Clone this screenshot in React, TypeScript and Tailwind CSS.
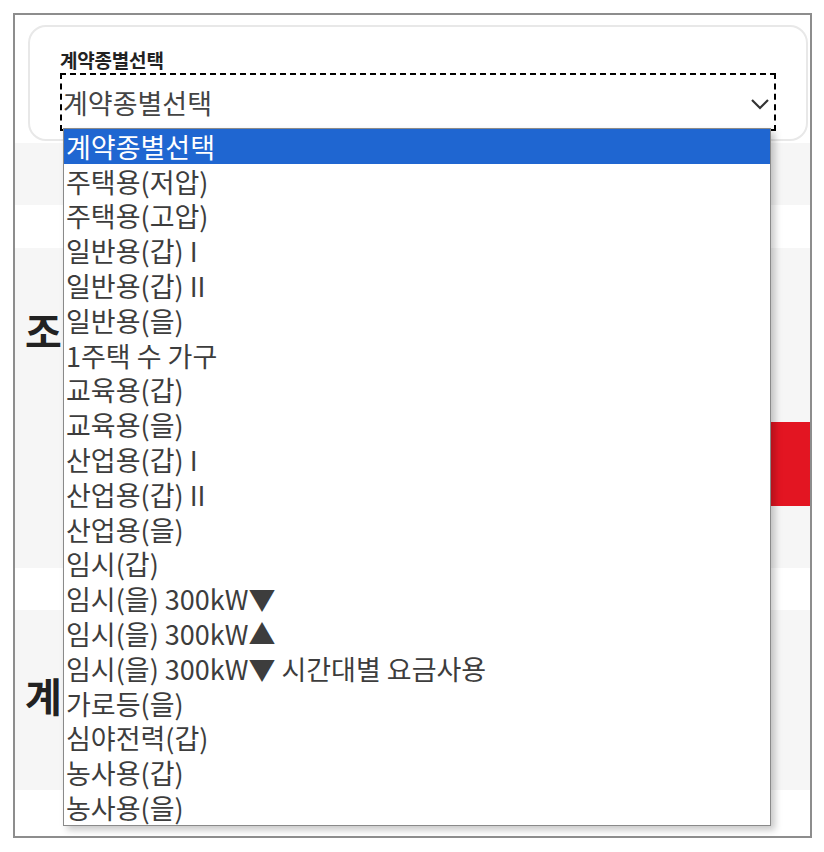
import React from 'react';

const options = [
  '계약종별선택',
  '주택용(저압)',
  '주택용(고압)',
  '일반용(갑) I',
  '일반용(갑) II',
  '일반용(을)',
  '1주택 수 가구',
  '교육용(갑)',
  '교육용(을)',
  '산업용(갑) I',
  '산업용(갑) II',
  '산업용(을)',
  '임시(갑)',
  '임시(을) 300kW▼',
  '임시(을) 300kW▲',
  '임시(을) 300kW▼ 시간대별 요금사용',
  '가로등(을)',
  '심야전력(갑)',
  '농사용(갑)',
  '농사용(을)',
];

const font = { fontFamily: '"Noto Sans CJK KR", "Noto Sans", sans-serif' };

export default function App() {
  return (
    <div className="w-[824px] h-[852px] bg-white pt-[13px] pl-[13px]" style={font}>
      <div className="relative w-[799px] h-[825px] border-2 border-[#8d8d8d] overflow-hidden flex flex-col bg-white">
        {/* search card */}
        <div className="pt-[10px] pl-[13px] pr-[2px] pb-[2px]">
          <div className="h-[116px] border-2 border-[#e8e8e8] rounded-[18px] bg-white px-[30px] pt-[22px]">
            <p className="text-[19px] leading-[22px] font-bold text-[#222] tracking-[-0.2px]">계약종별선택</p>
            <div className="mt-[2px] h-[58px] border-2 border-dashed border-black flex items-center justify-between pl-[1px] pr-[4px]">
              <span className="text-[27px] leading-none text-[#444]">계약종별선택</span>
              <svg width="20" height="12" viewBox="0 0 20 12" className="mt-[4px]">
                <polyline points="2,2 10,10 18,2" fill="none" stroke="#333" strokeWidth="2.2" />
              </svg>
            </div>
          </div>
        </div>

        <div className="h-[62px] bg-[#f6f6f6]" />
        <div className="h-[43px] bg-white" />

        <div className="h-[320px] bg-[#f6f6f6] flex flex-col px-[10px]">
          <h2 className="mt-[62px] text-[40px] leading-[40px] font-bold text-[#222]">조</h2>
          <div className="mt-[72px] self-end -mr-[10px] w-[240px] h-[84px] bg-[#e31522]" />
        </div>

        <div className="h-[42px] bg-white" />

        <div className="h-[180px] bg-[#f6f6f6] px-[10px]">
          <h2 className="mt-[65px] text-[40px] leading-[40px] font-bold text-[#222]">계</h2>
        </div>

        <div className="flex-1 bg-white" />

        {/* open select list */}
        <ul className="absolute left-[48px] top-[113px] w-[708px] border border-[#8a8a8a] bg-white shadow-[4px_4px_7px_rgba(0,0,0,0.22)]">
          {options.map((o, i) => (
            <li
              key={o}
              className={
                i === 0
                  ? 'h-[34.8px] flex items-center pl-[2px] text-[27px] leading-none bg-[#1f66d1] text-white'
                  : 'h-[34.8px] flex items-center pl-[2px] text-[27px] leading-none text-[#3d3d3d]'
              }
            >
              {o}
            </li>
          ))}
        </ul>
      </div>
    </div>
  );
}
